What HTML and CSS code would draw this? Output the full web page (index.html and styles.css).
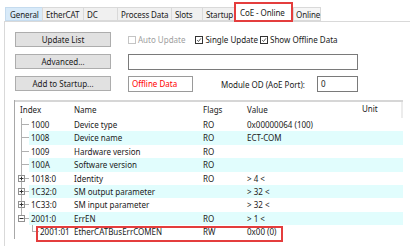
FILE: index.html
```html
<!DOCTYPE html>
<html>
<head>
<meta charset="utf-8">
<link rel="stylesheet" href="styles.css">
</head>
<body>
<div class="tabs">
  <div class="tab hover t-general">General</div>
  <div class="tab t-ethercat">EtherCAT</div>
  <div class="tab t-dc">DC</div>
  <div class="tab t-process">Process Data</div>
  <div class="tab t-slots">Slots</div>
  <div class="tab t-startup">Startup</div>
  <div class="tab active t-coe">CoE - Online</div>
  <div class="tab last t-online">Online</div>
</div>
<div class="panel">
  <div class="controls">
    <div class="crow">
      <div class="btn">Update List</div>
      <div class="right checks">
        <span class="chk disabled"></span><span class="lbl disabled-text">Auto Update</span>
        <span class="chk on gap1"><svg viewBox="0 0 8 8" width="8" height="8"><path d="M1.5 4.2 L3.3 6 L6.6 1.8" fill="none" stroke="#222" stroke-width="1"/></svg></span><span class="lbl">Single Update</span>
        <span class="chk on gap2"><svg viewBox="0 0 8 8" width="8" height="8"><path d="M1.5 4.2 L3.3 6 L6.6 1.8" fill="none" stroke="#222" stroke-width="1"/></svg></span><span class="lbl">Show Offline Data</span>
      </div>
    </div>
    <div class="crow">
      <div class="btn">Advanced...</div>
      <div class="right"><div class="field wide"></div></div>
    </div>
    <div class="crow">
      <div class="btn">Add to Startup...</div>
      <div class="right">
        <div class="field offline">Offline Data</div>
        <div class="modlbl">Module OD (AoE Port):</div>
        <div class="field port">0</div>
      </div>
    </div>
  </div>
  <div class="list">
    <div class="hdr">
      <div class="h-index">Index</div>
      <div>Name</div>
      <div>Flags</div>
      <div>Value</div>
      <div class="h-unit">Unit</div>
    </div>
    <div class="row"><div class="tree line"></div><div class="cells"><div class="ix">1000</div><div>Device type</div><div>RO</div><div>0x00000064 (100)</div><div></div></div></div>
    <div class="row alt"><div class="tree line"></div><div class="cells"><div class="ix">1008</div><div>Device name</div><div>RO</div><div>ECT-COM</div><div></div></div></div>
    <div class="row"><div class="tree line"></div><div class="cells"><div class="ix">1009</div><div>Hardware version</div><div>RO</div><div></div><div></div></div></div>
    <div class="row alt"><div class="tree line"></div><div class="cells"><div class="ix">100A</div><div>Software version</div><div>RO</div><div></div><div></div></div></div>
    <div class="row"><div class="tree line"><span class="exp"><svg viewBox="0 0 7 7" width="7" height="7"><path d="M1.5 3.5H5.5M3.5 1.5V5.5" stroke="#333" stroke-width="1"/></svg></span></div><div class="cells"><div class="ix">1018:0</div><div>Identity</div><div>RO</div><div>&gt; 4 &lt;</div><div></div></div></div>
    <div class="row alt"><div class="tree line"><span class="exp"><svg viewBox="0 0 7 7" width="7" height="7"><path d="M1.5 3.5H5.5M3.5 1.5V5.5" stroke="#333" stroke-width="1"/></svg></span></div><div class="cells"><div class="ix">1C32:0</div><div>SM output parameter</div><div></div><div>&gt; 32 &lt;</div><div></div></div></div>
    <div class="row"><div class="tree line"><span class="exp"><svg viewBox="0 0 7 7" width="7" height="7"><path d="M1.5 3.5H5.5M3.5 1.5V5.5" stroke="#333" stroke-width="1"/></svg></span></div><div class="cells"><div class="ix">1C33:0</div><div>SM input parameter</div><div></div><div>&gt; 32 &lt;</div><div></div></div></div>
    <div class="row alt"><div class="tree line lastline"><span class="exp"><svg viewBox="0 0 7 7" width="7" height="7"><path d="M1.5 3.5H5.5" stroke="#333" stroke-width="1"/></svg></span></div><div class="cells"><div class="ix">2001:0</div><div>ErrEN</div><div>RO</div><div>&gt; 1 &lt;</div><div></div></div></div>
    <div class="row sel"><div class="tree"></div><div class="cells"><div class="ix child">2001:01</div><div>EtherCATBusErrCOMEN</div><div>RW</div><div>0x00 (0)</div><div></div></div></div>
  </div>
</div>
</body>
</html>
```
FILE: styles.css
```css
* { box-sizing: border-box; }
body {
  margin: 0;
  width: 410px;
  height: 246px;
  overflow: hidden;
  background: #fff;
  font-family: "Noto Sans", "Noto Sans CJK SC", sans-serif;
  font-size: 8px;
  color: #1a1a1a;
}
.tabs {
  display: flex;
  margin: 7px 0 0 5px;
  height: 14px;
  position: relative;
  z-index: 2;
}
.tab {
  height: 14px;
  line-height: 13px;
  padding-left: 3px;
  background: #f0f0f0;
  border: 1px solid #d9d9d9;
  border-right: none;
  white-space: nowrap;
  letter-spacing: -0.1px;
}
.t-general { width: 37px; padding-left: 4px; }
.t-ethercat { width: 41px; }
.t-dc { width: 34px; }
.t-process { width: 54px; }
.t-slots { width: 31px; }
.t-startup { width: 32px; }
.t-coe { width: 59px; }
.t-online { width: 28px; }
.tab.hover { background: #d8eaf9; border-color: #c5dbee; }
.tab.last { border-right: 1px solid #d9d9d9; background: #f6f6f6; padding-left: 2px; }
.tab.active {
  height: 20px;
  margin-top: -5px;
  background: #fff;
  border: 2px solid #e43d3d;
  line-height: 18px;
  padding-left: 4px;
}
.panel {
  margin-left: 4px;
  border-top: 1px solid #d9d9d9;
  border-left: 1px solid #d9d9d9;
  height: 225px;
  padding: 10px 0 0 10px;
}
.controls { display: flex; flex-direction: column; gap: 6px; }
.crow { display: flex; height: 16px; align-items: flex-start; }
.btn {
  width: 96px;
  height: 15px;
  background: #e1e1e1;
  border: 1px solid #adadad;
  text-align: center;
  line-height: 13px;
}
.right { margin-left: 17px; display: flex; align-items: center; height: 16px; }
.checks { height: 15px; }
.chk {
  width: 8px;
  height: 8px;
  border: 1px solid #333;
  display: inline-flex;
  align-items: center;
  justify-content: center;
  background: #fff;
}
.chk svg { display: block; }
.chk.disabled { border-color: #c4c4c4; }
.lbl { margin-left: 2px; }
.disabled-text { color: #a0a0a0; }
.gap1 { margin-left: 10px; }
.gap2 { margin-left: 2px; }
.field {
  height: 16px;
  border: 1px solid #7a7a7a;
  background: #fff;
  line-height: 14px;
  padding-left: 3px;
}
.field.wide { width: 230px; }
.field.offline { width: 65px; color: #ff0000; border-color: #9a9a9a; }
.modlbl { width: 124px; text-align: right; padding-right: 12px; }
.field.port { width: 41px; }
.list {
  margin: 8px 0 0 -1px;
  width: 389px;
  border-left: 1px solid #a8a8a8;
}
.hdr {
  display: grid;
  grid-template-columns: 59px 129px 44px 115px 1fr;
  height: 18px;
  border-top: 2px solid #d6d6d6;
  align-items: center;
  line-height: 14px;
}
.h-index { padding-left: 5px; }
.h-unit { border-right: 2px solid #ececec; height: 16px; line-height: 14px; }
.row {
  display: flex;
  height: 13.4px;
  position: relative;
}
.tree { width: 14px; position: relative; flex: none; }
.tree.line::before {
  content: "";
  position: absolute;
  left: 6px;
  top: 0;
  bottom: 0;
  border-left: 1px solid #b0b0b0;
}
.tree.lastline::before { bottom: 50%; }
.tree.line::after {
  content: "";
  position: absolute;
  left: 6px;
  width: 8px;
  top: 6px;
  border-top: 1px solid #b0b0b0;
}
.exp {
  position: absolute;
  left: 3px;
  top: 3px;
  width: 7px;
  height: 7px;
  border: 1px solid #919191;
  background: #fff;
  z-index: 1;
  display: flex;
}
.exp svg { display: block; margin: -1px; }
.cells {
  flex: 1;
  display: grid;
  grid-template-columns: 45px 129px 44px 115px 1fr;
  line-height: 13.4px;
  white-space: nowrap;
}
.row.alt .cells { background: #e1fdfd; }
.ix { padding-left: 2px; position: relative; }
.ix.child { padding-left: 11px; }
.ix.child::before {
  content: "";
  position: absolute;
  left: 3px;
  top: 0;
  height: 6px;
  width: 6px;
  border-left: 1px solid #b0b0b0;
  border-bottom: 1px solid #b0b0b0;
}
.row.sel::after {
  content: "";
  position: absolute;
  left: 21px;
  top: 1px;
  width: 243px;
  height: 12px;
  border: 2px solid #e43d3d;
  pointer-events: none;
}
```
